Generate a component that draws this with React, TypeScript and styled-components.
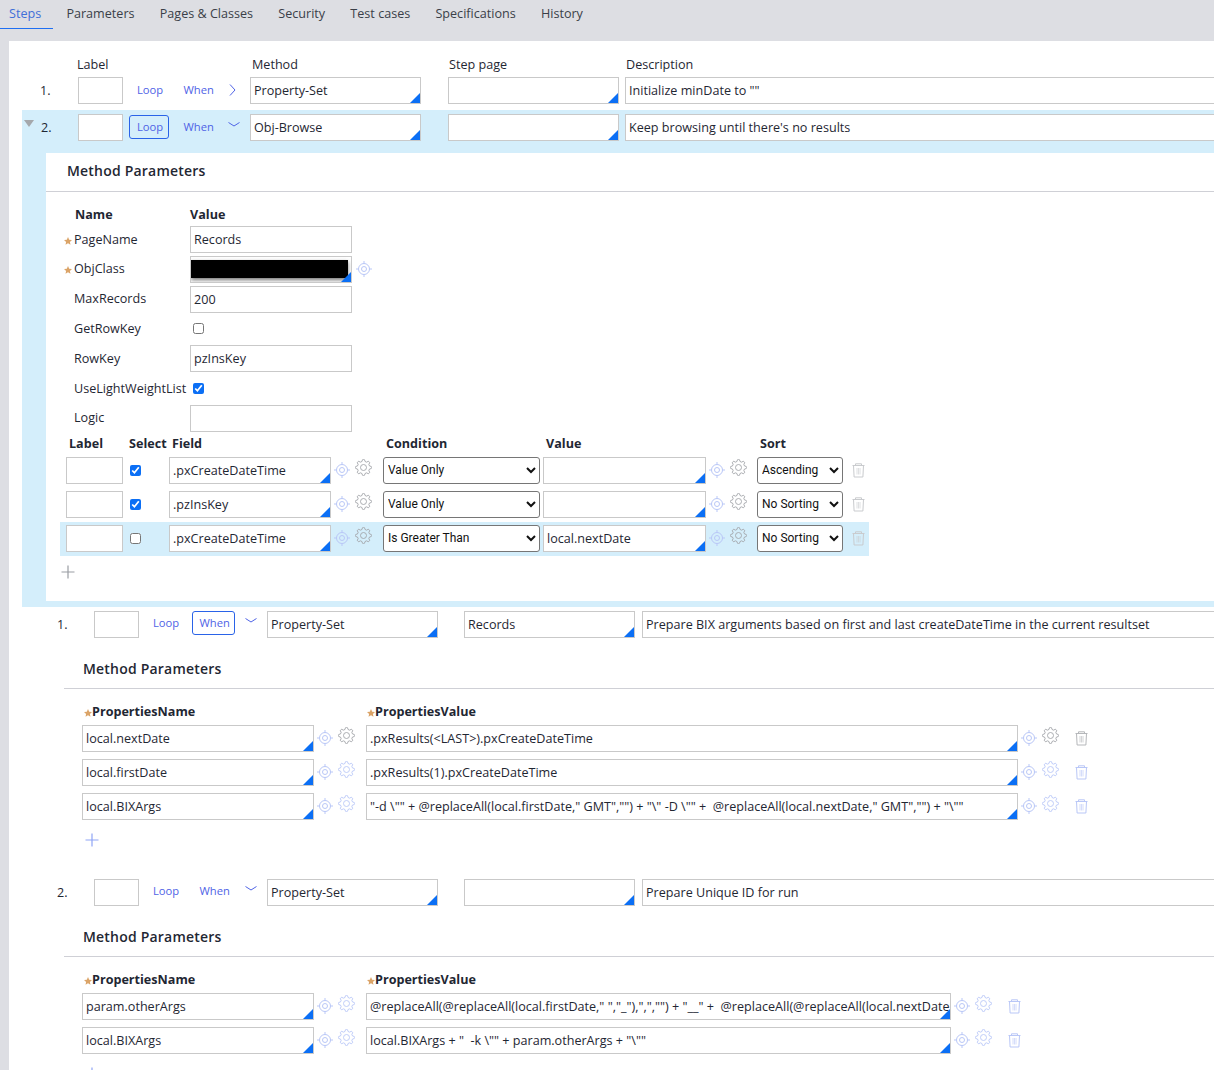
import React from 'react'
import styled, { createGlobalStyle } from 'styled-components'

const GlobalStyle = createGlobalStyle`
  html, body {
    margin: 0;
    padding: 0;
    background: #dddee3;
    font-family: 'Open Sans', 'Liberation Sans', sans-serif;
    font-size: 12.6px;
    color: #1f2733;
  }
  #root {
    width: 1214px;
    height: 1070px;
    overflow: hidden;
  }
`

const Tabs = styled.div`
  display: flex;
  height: 41px;
  align-items: flex-start;
`

const Tab = styled.div<{ $active?: boolean }>`
  height: 28px;
  line-height: 27px;
  padding: 0 12.6px;
  color: ${(p) => (p.$active ? '#3f6fd8' : '#3a3f48')};
  border-bottom: 1px solid ${(p) => (p.$active ? '#1f6ff2' : 'transparent')};
  &:first-child {
    padding-left: 9px;
    padding-right: 11.6px;
    margin-right: 1px;
  }
`

const Sheet = styled.div`
  margin-left: 8px;
  padding-top: 16px;
  background: #fff;
  box-shadow: inset 1px 0 0 #dddee3;
  height: 1013px;
  overflow: hidden;
`

const ColumnHead = styled.div`
  display: flex;
  box-sizing: border-box;
  height: 20px;
  padding-top: 1px;
  line-height: 14px;
`

const ColumnTitle = styled.div<{ $left: number }>`
  margin-left: ${(p) => p.$left}px;
  width: 0;
  white-space: nowrap;
`

const StepRow = styled.div<{ $indent: number }>`
  display: flex;
  align-items: center;
  height: 27px;
  padding-left: ${(p) => p.$indent}px;
  width: 1300px;
`

const StepNo = styled.div<{ $w: number; $ml: number }>`
  width: ${(p) => p.$w}px;
  margin-left: ${(p) => p.$ml}px;
  flex-shrink: 0;
`

const Toggle = styled.div`
  width: 0;
  height: 0;
  margin-right: 8px;
  margin-top: -8px;
  border-left: 5px solid transparent;
  border-right: 5px solid transparent;
  border-top: 7px solid #a5a8ac;
`

const Field = styled.div<{ $w: number; $ml?: number; $corner?: boolean }>`
  position: relative;
  flex-shrink: 0;
  box-sizing: border-box;
  width: ${(p) => p.$w}px;
  height: 27px;
  margin-left: ${(p) => p.$ml ?? 0}px;
  padding-left: 3px;
  border: 1px solid #c9c9c9;
  background: #fff;
  line-height: 25px;
  white-space: pre;
  overflow: hidden;
  &::after {
    content: '';
    display: ${(p) => (p.$corner ? 'block' : 'none')};
    position: absolute;
    right: 0;
    bottom: 0;
    border-left: 10px solid transparent;
    border-bottom: 10px solid #0b6ff5;
  }
`

const Redacted = styled.div`
  position: absolute;
  left: 0;
  top: 3px;
  width: 157px;
  height: 18px;
  background: #000;
  box-shadow: 0 2px 4px rgba(0, 0, 0, 0.55);
`

const Action = styled.div<{ $w: number; $ml: number; $on?: boolean }>`
  box-sizing: border-box;
  flex-shrink: 0;
  width: ${(p) => p.$w}px;
  height: 24px;
  margin-left: ${(p) => p.$ml}px;
  margin-top: -2px;
  padding-left: 7px;
  line-height: 22px;
  font-size: 11.2px;
  color: #4f63e6;
  border: 1px solid ${(p) => (p.$on ? '#2a63e8' : 'transparent')};
  border-radius: 3px;
`

const ChevronSlot = styled.div<{ $w: number; $open?: boolean }>`
  width: ${(p) => p.$w}px;
  flex-shrink: 0;
  display: flex;
  justify-content: center;
  margin-top: ${(p) => (p.$open ? -6 : -1)}px;
  color: #4f63e6;
`

const Expanded = styled.div`
  margin-left: 14px;
  margin-top: 6px;
  padding: 4px 0 6px;
  background: #d4eefb;
`

const Panel = styled.div`
  display: flow-root;
  margin-left: 24px;
  margin-top: 12px;
  background: #fff;
`

const SubPanel = styled.div`
  margin-left: 56px;
  margin-top: 12px;
`

const StepGap = styled.div`
  height: 4px;
`

const MethodHead = styled.div<{ $pad: number; $lh: number }>`
  height: 38px;
  line-height: ${(p) => p.$lh}px;
  padding-left: ${(p) => p.$pad}px;
  border-bottom: 1px solid #cfd0d6;
  font-size: 14px;
  font-weight: 600;
  letter-spacing: 0.2px;
`

const ParamHead = styled.div`
  display: grid;
  grid-template-columns: 115px 162px;
  margin: 15px 0 3px 29px;
  height: 16px;
  line-height: 16px;
  font-weight: 700;
`

const ParamGrid = styled.div`
  display: grid;
  grid-template-columns: 116px 162px 30px;
  grid-auto-rows: 27px;
  row-gap: 2.83px;
  align-items: center;
  padding-left: 28px;
`

const ParamName = styled.div`
  white-space: nowrap;
  margin-bottom: 1px;
`

const Star = styled.svg`
  width: 8px;
  height: 8px;
  vertical-align: -1px;
  fill: #dba468;
`

const MarginStar = styled(Star)`
  margin-left: -10px;
  margin-right: 2px;
`

const ParamCheck = styled.input`
  width: 11px;
  height: 11px;
  margin: 0 0 1px 3px;
  accent-color: #0b6ff5;
  justify-self: start;
`

const IconHolder = styled.div<{ $ml?: number }>`
  display: flex;
  align-items: center;
  margin-left: ${(p) => p.$ml ?? 0}px;
`

const FilterHead = styled.div`
  display: grid;
  grid-template-columns: 57px 46px 162px 52px 160px 163px 51px 86px;
  height: 19px;
  line-height: 18px;
  margin: 3px 0 0 14px;
  padding-left: 6px;
  font-weight: 700;
  white-space: nowrap;
`

const HeadCell = styled.div<{ $pad?: number }>`
  padding-left: ${(p) => p.$pad ?? 3}px;
`

const FilterRow = styled.div<{ $on?: boolean }>`
  display: grid;
  grid-template-columns: 57px 46px 162px 52px 160px 163px 51px 86px 26px;
  align-items: center;
  box-sizing: border-box;
  width: 809px;
  height: 34px;
  margin-left: 14px;
  padding: 3px 0 4px 6px;
  background: ${(p) => (p.$on ? '#d4eefb' : 'transparent')};
`

const RowCheck = styled.input`
  width: 11px;
  height: 11px;
  margin: 0 0 0 7px;
  accent-color: #0b6ff5;
  justify-self: start;
`

const Choice = styled.select<{ $w: number }>`
  box-sizing: border-box;
  width: ${(p) => p.$w}px;
  height: 27px;
  padding: 0;
  font-family: Roboto, 'Liberation Sans', sans-serif;
  font-size: 12px;
  color: #111;
  background: #fff;
  border: 1px solid #767676;
  border-radius: 3px;
`

const Tools = styled.div`
  display: flex;
  flex-shrink: 0;
  align-items: center;
  box-sizing: border-box;
  width: 52px;
  padding-left: 3px;
`

const ToolGlyph = styled.svg<{ $tone?: string; $lift?: number; $ml?: number }>`
  flex-shrink: 0;
  fill: none;
  stroke: ${(p) => p.$tone ?? '#b9c7f7'};
  margin-left: ${(p) => p.$ml ?? 0}px;
  margin-bottom: ${(p) => p.$lift ?? 0}px;
`

const AddButton = styled.svg<{ $tone: string; $ml: number; $mt: number; $mb: number }>`
  display: block;
  width: 14px;
  height: 14px;
  margin: ${(p) => p.$mt}px 0 ${(p) => p.$mb}px ${(p) => p.$ml}px;
  stroke: ${(p) => p.$tone};
  fill: none;
`

const PropHead = styled.div`
  display: grid;
  grid-template-columns: 283px 400px;
  height: 16px;
  line-height: 18px;
  margin: 14px 0 6px 20px;
  font-weight: 700;
`

const PropRow = styled.div`
  display: flex;
  align-items: center;
  height: 27px;
  margin-bottom: 7px;
  padding-left: 18px;
  &:last-of-type {
    margin-bottom: 0;
  }
`

const PropList = styled.div``

const gearPath = (() => {
  const teeth = 8
  const pts: string[] = []
  for (let i = 0; i < teeth; i++) {
    const a = (i / teeth) * Math.PI * 2
    const step = (Math.PI * 2) / teeth
    const at = (r: number, t: number) =>
      `${(8.5 + r * Math.cos(t)).toFixed(2)} ${(8.5 + r * Math.sin(t)).toFixed(2)}`
    pts.push(`${i === 0 ? 'M' : 'L'}${at(6.2, a - step * 0.32)}`)
    pts.push(`Q${at(8.6, a - step * 0.2)} ${at(8, a)}`)
    pts.push(`Q${at(8.6, a + step * 0.2)} ${at(6.2, a + step * 0.32)}`)
  }
  return pts.join(' ') + 'Z'
})()

const Target = () => (
  <ToolGlyph width="16" height="16" viewBox="0 0 16 16" strokeWidth="1">
    <circle cx="8" cy="8" r="5.5" />
    <circle cx="8" cy="8" r="2.5" />
    <path d="M8 0v2.5M8 13.5V16M0 8h2.5M13.5 8H16" />
  </ToolGlyph>
)

const Gear = ({ tone }: { tone?: string }) => (
  <ToolGlyph width="17" height="17" viewBox="0 0 17 17" strokeWidth="0.9" $tone={tone} $ml={4.5} $lift={5}>
    <path d={gearPath} />
    <circle cx="8.5" cy="8.5" r="3" />
  </ToolGlyph>
)

const Trash = ({ tone, ml }: { tone?: string; ml?: number }) => (
  <ToolGlyph width="13" height="15" viewBox="0 0 13 15" strokeWidth="1" $tone={tone} $ml={ml}>
    <path d="M0.5 2.5h12M3.5 2.5V0.8h6v1.7M1.5 2.5l0.6 11.5h8.8l0.6-11.5" />
    <path d="M5 5v6.5M6.5 5v6.5M8 5v6.5" opacity="0.6" />
  </ToolGlyph>
)

const ReqStar = ({ margin }: { margin?: boolean }) => {
  const Comp = margin ? MarginStar : Star
  return (
    <Comp viewBox="0 0 10 10">
      <path d="M5 0l1.5 3.3 3.5.4-2.6 2.4.7 3.6L5 7.9 1.9 9.7l.7-3.6L0 3.7l3.5-.4z" />
    </Comp>
  )
}

const Chevron = ({ open }: { open?: boolean }) => (
  <svg width="12" height="12" viewBox="0 0 12 12" fill="none" stroke="currentColor" strokeWidth="1">
    {open ? <path d="M0.5 3.5l5.5 3.5 5.5-3.5" /> : <path d="M2 0.5l5 5.5-5 5.5" />}
  </svg>
)

const Plus = ({ tone, ml, mt, mb }: { tone: string; ml: number; mt: number; mb: number }) => (
  <AddButton $tone={tone} $ml={ml} $mt={mt} $mb={mb} viewBox="0 0 14 14" strokeWidth="1.2">
    <path d="M7 0.5v13M0.5 7h13" />
  </AddButton>
)

type StepProps = {
  no: string
  indent: number
  method: string
  page?: string
  desc: string
  loopOn?: boolean
  whenOn?: boolean
  open?: boolean
  toggle?: boolean
  nested?: boolean
}

const Step = ({ no, indent, method, page, desc, loopOn, whenOn, open, toggle, nested }: StepProps) => (
  <StepRow $indent={indent}>
    {toggle && <Toggle />}
    <StepNo $w={toggle || nested ? 37 : 38} $ml={nested ? 0 : -1}>{no}</StepNo>
    <Field $w={45} />
    <Action $w={40} $ml={6} $on={loopOn}>Loop</Action>
    <Action $w={43} $ml={6.5} $on={whenOn}>When</Action>
    <ChevronSlot $w={nested ? 32.5 : 31.5} $open={open}><Chevron open={open} /></ChevronSlot>
    <Field $w={171} $corner>{method}</Field>
    <Field $w={171} $ml={nested ? 26 : 27} $corner>{page}</Field>
    <Field $w={760} $ml={nested ? 7 : 6}>{desc}</Field>
  </StepRow>
)

const filterRows = [
  { checked: true, field: '.pxCreateDateTime', cond: 'Value Only', value: '', sort: 'Ascending' },
  { checked: true, field: '.pzInsKey', cond: 'Value Only', value: '', sort: 'No Sorting' },
  { checked: false, field: '.pxCreateDateTime', cond: 'Is Greater Than', value: 'local.nextDate', sort: 'No Sorting', on: true }
]

const FilterLine = ({ row }: { row: (typeof filterRows)[number] }) => (
  <FilterRow $on={row.on}>
    <Field $w={57} />
    <RowCheck type="checkbox" defaultChecked={row.checked} />
    <Field $w={162} $corner>{row.field}</Field>
    <Tools><Target /><Gear tone="#a3a5a9" /></Tools>
    <Choice $w={157} defaultValue={row.cond}>
      <option>Value Only</option>
      <option>Is Greater Than</option>
    </Choice>
    <Field $w={163} $corner>{row.value}</Field>
    <Tools><Target /><Gear tone="#a3a5a9" /></Tools>
    <Choice $w={86} defaultValue={row.sort}>
      <option>Ascending</option>
      <option>No Sorting</option>
    </Choice>
    <IconHolder $ml={9}><Trash tone="#c9cbce" /></IconHolder>
  </FilterRow>
)

type PropItem = { name: string; value: string; gear?: string; trash?: string }

const PropLine = ({ item, width }: { item: PropItem; width: number }) => (
  <PropRow>
    <Field $w={232} $corner>{item.name}</Field>
    <Tools><Target /><Gear tone={item.gear} /></Tools>
    <Field $w={width} $corner>{item.value}</Field>
    <Tools><Target /><Gear tone={item.gear} /><Trash tone={item.trash} ml={16} /></Tools>
  </PropRow>
)

const MethodProps = ({ items, width }: { items: PropItem[]; width: number }) => (
  <SubPanel>
    <MethodHead $pad={19} $lh={37}>Method Parameters</MethodHead>
    <PropHead>
      <div><ReqStar />PropertiesName</div>
      <div><ReqStar />PropertiesValue</div>
    </PropHead>
    <PropList>
      {items.map((item) => <PropLine key={item.name} item={item} width={width} />)}
    </PropList>
  </SubPanel>
)

const firstProps: PropItem[] = [
  { name: 'local.nextDate', value: '.pxResults(<LAST>).pxCreateDateTime', gear: '#a3a5a9', trash: '#b5b7ba' },
  { name: 'local.firstDate', value: '.pxResults(1).pxCreateDateTime' },
  { name: 'local.BIXArgs', value: '"-d \\"" + @replaceAll(local.firstDate," GMT","") + "\\" -D \\"" +  @replaceAll(local.nextDate," GMT","") + "\\""' }
]

const secondProps: PropItem[] = [
  { name: 'param.otherArgs', value: '@replaceAll(@replaceAll(local.firstDate," ","_"),",","") + "__" +  @replaceAll(@replaceAll(local.nextDate' },
  { name: 'local.BIXArgs', value: 'local.BIXArgs + "  -k \\"" + param.otherArgs + "\\""' }
]

export default function App() {
  return (
    <>
      <GlobalStyle />
      <Tabs>
        <Tab $active>Steps</Tab>
        <Tab>Parameters</Tab>
        <Tab>Pages &amp; Classes</Tab>
        <Tab>Security</Tab>
        <Tab>Test cases</Tab>
        <Tab>Specifications</Tab>
        <Tab>History</Tab>
      </Tabs>
      <Sheet>
        <ColumnHead>
          <ColumnTitle $left={69}>Label</ColumnTitle>
          <ColumnTitle $left={175}>Method</ColumnTitle>
          <ColumnTitle $left={197}>Step page</ColumnTitle>
          <ColumnTitle $left={177}>Description</ColumnTitle>
        </ColumnHead>
        <Step no="1." indent={33} method="Property-Set" desc={'Initialize minDate to ""'} />
        <Expanded>
          <Step
            toggle
            no="2."
            indent={2}
            method="Obj-Browse"
            desc="Keep browsing until there's no results"
            loopOn
            open
          />
          <Panel>
            <MethodHead $pad={21} $lh={36}>Method Parameters</MethodHead>
            <ParamHead>
              <div>Name</div>
              <div>Value</div>
            </ParamHead>
            <ParamGrid>
              <ParamName><ReqStar margin />PageName</ParamName>
              <Field $w={162}>Records</Field>
              <span />
              <ParamName><ReqStar margin />ObjClass</ParamName>
              <Field $w={162} $corner><Redacted /></Field>
              <IconHolder $ml={4}><Target /></IconHolder>
              <ParamName>MaxRecords</ParamName>
              <Field $w={162}>200</Field>
              <span />
              <ParamName>GetRowKey</ParamName>
              <ParamCheck type="checkbox" />
              <span />
              <ParamName>RowKey</ParamName>
              <Field $w={162}>pzInsKey</Field>
              <span />
              <ParamName>UseLightWeightList</ParamName>
              <ParamCheck type="checkbox" defaultChecked />
              <span />
              <ParamName>Logic</ParamName>
              <Field $w={162} />
              <span />
            </ParamGrid>
            <FilterHead>
              <HeadCell>Label</HeadCell>
              <HeadCell $pad={6}>Select</HeadCell>
              <HeadCell>Field</HeadCell>
              <span />
              <HeadCell>Condition</HeadCell>
              <HeadCell>Value</HeadCell>
              <span />
              <HeadCell>Sort</HeadCell>
            </FilterHead>
            {filterRows.map((row, i) => <FilterLine key={i} row={row} />)}
            <Plus tone="#9a9da3" ml={15} mt={9} mb={22} />
          </Panel>
        </Expanded>
        <StepGap />
        <Step
          nested
          no="1."
          indent={49}
          method="Property-Set"
          page="Records"
          desc="Prepare BIX arguments based on first and last createDateTime in the current resultset"
          whenOn
          open
        />
        <MethodProps items={firstProps} width={652} />
        <Plus tone="#8fa5f5" ml={77} mt={13} mb={32} />
        <Step nested no="2." indent={49} method="Property-Set" desc="Prepare Unique ID for run" open />
        <MethodProps items={secondProps} width={585} />
        <Plus tone="#8fa5f5" ml={77} mt={13} mb={0} />
      </Sheet>
    </>
  )
}
